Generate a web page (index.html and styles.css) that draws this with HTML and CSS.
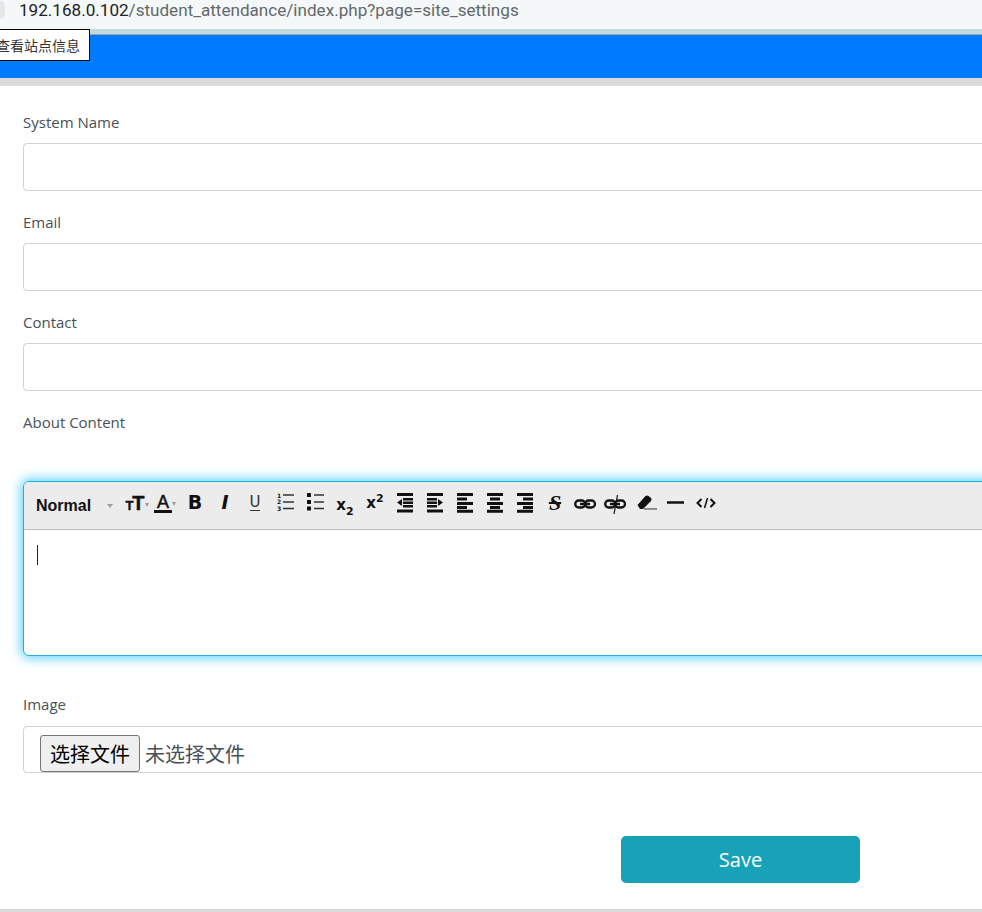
FILE: index.html
```html
<!DOCTYPE html>
<html lang="en">
<head>
  <meta charset="UTF-8">
  <meta name="viewport" content="width=device-width, initial-scale=1.0">
  <title>Site Settings</title>
  <link rel="stylesheet" href="styles.css">
</head>
<body>
  <!-- Browser address bar -->
  <div class="addressbar">
    <span class="site-chip"></span>
    <span class="url"><span class="url-host">192.168.0.102</span>/student_attendance/index.php?page=site_settings</span>
  </div>
  <div class="addressbar-edge"></div>
  <div class="tooltip">查看站点信息</div>

  <div class="topbar"></div>
  <div class="topbar-shadow"></div>

  <form class="settings-form">
    <div class="form-group">
      <label class="form-label">System Name</label>
      <input class="form-input" type="text">
    </div>
    <div class="form-group">
      <label class="form-label">Email</label>
      <input class="form-input" type="text">
    </div>
    <div class="form-group">
      <label class="form-label">Contact</label>
      <input class="form-input" type="text">
    </div>

    <div class="form-group form-group-editor">
      <label class="form-label">About Content</label>
      <div class="editor">
        <div class="editor-toolbar">
          <div class="style-select">
            <span class="style-name">Normal</span>
            <span class="caret-down"></span>
          </div>
          <span class="tool tool-size"><span class="t-small">T</span><span class="t-big">T</span><span class="caret-small"></span></span>
          <span class="tool tool-color"><span class="color-a">A</span><span class="caret-small"></span></span>
          <span class="tool tool-text tool-bold">B</span>
          <span class="tool tool-text tool-italic">I</span>
          <span class="tool tool-text tool-underline"><span class="underline-u">U</span></span>
          <span class="tool">
            <svg width="30" height="30" viewBox="0 0 30 30">
              <text class="ol-num" x="7" y="9.5">1</text><text class="ol-num" x="7" y="16">2</text><text class="ol-num" x="7" y="22.5">3</text>
              <path d="M13 7h11M13 14h11M13 20.5h11" stroke="#333" stroke-width="1.3" fill="none"/>
            </svg>
          </span>
          <span class="tool">
            <svg width="30" height="30" viewBox="0 0 30 30">
              <path d="M7 5h4v4H7zM7 12h4v4H7zM7 18.500h4v4H7z" fill="#111"/>
              <path d="M14 7h10M14 14h10M14 20.500h10" stroke="#333" stroke-width="1.3" fill="none"/>
            </svg>
          </span>
          <span class="tool tool-text tool-script"><span class="script-sub">x<sub>2</sub></span></span>
          <span class="tool tool-text tool-script"><span class="script-sup">x<sup>2</sup></span></span>
          <span class="tool">
            <svg width="30" height="30" viewBox="0 0 30 30">
              <path d="M7 5h16v3H7zM13 10h10v2.400H13zM13 13.500h10v2.400H13zM13 17h10v2.400H13zM7 21.500h16v3H7z" fill="#111"/>
              <path d="M7 14.500l5-3.500v7z" fill="#111"/>
            </svg>
          </span>
          <span class="tool">
            <svg width="30" height="30" viewBox="0 0 30 30">
              <path d="M7 5h16v3H7zM7 10h10v2.400H7zM7 13.500h10v2.400H7zM7 17h10v2.400H7zM7 21.500h16v3H7z" fill="#111"/>
              <path d="M23 14.500l-5-3.500v7z" fill="#111"/>
            </svg>
          </span>
          <span class="tool">
            <svg width="30" height="30" viewBox="0 0 30 30">
              <path d="M7 5h16v3H7zM7 9.500h10v3H7zM7 14h16v3H7zM7 18h10v3H7zM7 21.800h16v3H7z" fill="#111"/>
            </svg>
          </span>
          <span class="tool">
            <svg width="30" height="30" viewBox="0 0 30 30">
              <path d="M7 5h16v3H7zM10 9.500h10v3H10zM7 14h16v3H7zM10 18h10v3H10zM7 21.800h16v3H7z" fill="#111"/>
            </svg>
          </span>
          <span class="tool">
            <svg width="30" height="30" viewBox="0 0 30 30">
              <path d="M7 5h16v3H7zM13 9.500h10v3H13zM7 14h16v3H7zM13 18h10v3H13zM7 21.800h16v3H7z" fill="#111"/>
            </svg>
          </span>
          <span class="tool tool-text tool-strike">S</span>
          <span class="tool">
            <svg width="30" height="30" viewBox="0 0 30 30">
              <rect x="5.200" y="12.500" width="10" height="7" rx="3.500" fill="none" stroke="#111" stroke-width="2.300"/>
              <rect x="15" y="12.500" width="10" height="7" rx="3.500" fill="none" stroke="#111" stroke-width="2.300"/>
              <path d="M10 16h10" stroke="#111" stroke-width="2.300"/>
            </svg>
          </span>
          <span class="tool">
            <svg width="30" height="30" viewBox="0 0 30 30">
              <rect x="5.200" y="12.500" width="10" height="7" rx="3.500" fill="none" stroke="#111" stroke-width="2.300"/>
              <rect x="15" y="12.500" width="10" height="7" rx="3.500" fill="none" stroke="#111" stroke-width="2.300"/>
              <path d="M10 16h10" stroke="#111" stroke-width="2.300"/>
              <path d="M17.500 7l-3.500 19" stroke="#111" stroke-width="1.200"/>
            </svg>
          </span>
          <span class="tool">
            <svg width="30" height="30" viewBox="0 0 30 30">
              <path d="M7.500 17l8-9c1-.8 2-.8 3 0l2.500 2c.7 1 .7 2 0 3l-8 8H10z" fill="#111"/>
              <path d="M14 21h13" stroke="#666" stroke-width="1.300"/>
            </svg>
          </span>
          <span class="tool">
            <svg width="30" height="30" viewBox="0 0 30 30">
              <path d="M7 14.500h17" stroke="#111" stroke-width="2.600"/>
            </svg>
          </span>
          <span class="tool">
            <svg width="30" height="30" viewBox="0 0 30 30">
              <path d="M11.500 11l-4 4 4 4M20.500 11l4 4-4 4" fill="none" stroke="#111" stroke-width="2"/>
              <path d="M17.500 10l-3 10" fill="none" stroke="#111" stroke-width="1.500"/>
            </svg>
          </span>
        </div>
        <div class="editor-body"><span class="text-cursor"></span></div>
      </div>
    </div>

    <div class="form-group form-group-image">
      <label class="form-label">Image</label>
      <div class="file-input">
        <button class="file-button" type="button">选择文件</button>
        <span class="file-name">未选择文件</span>
      </div>
    </div>

    <div class="form-footer">
      <button class="save-button" type="submit">Save</button>
    </div>
  </form>

  <div class="page-end"></div>
</body>
</html>
```

FILE: styles.css
```css
html, body {
  height: 912px;
  overflow: hidden;
}
body {
  margin: 0;
  padding: 0;
  position: relative;
  width: 982px;
  font-family: "Open Sans", "Noto Sans", sans-serif;
  background: #fff;
  color: #495057;
}

/* browser chrome */
.addressbar {
  height: 29px;
  background: #f4f8f8;
  display: flex;
  align-items: center;
  overflow: hidden;
}
.site-chip {
  width: 5px;
  height: 18px;
  flex: none;
  margin-top: -10px;
  background: #e6e8e8;
  border-radius: 0 10px 10px 0;
}
.url {
  margin-left: 14px;
  position: relative;
  top: -5px;
  font-family: Roboto, "Liberation Sans", sans-serif;
  font-size: 17.1px;
  color: #63686c;
  white-space: nowrap;
}
.url-host {
  color: #202124;
}
.addressbar-edge {
  height: 5px;
  background: #c5dade;
  border-bottom: 1px solid #9aa5a7;
}
.tooltip {
  position: absolute;
  top: 29px;
  left: -11px;
  height: 30px;
  padding: 0 9px 0 6px;
  border: 1px solid #000;
  background: #fff;
  color: #333;
  font-family: "Noto Sans CJK SC", sans-serif;
  font-size: 14px;
  line-height: 30px;
  white-space: nowrap;
}

/* app top bar */
.topbar {
  height: 43px;
  background: #007bff;
}
.topbar-shadow {
  height: 8px;
  background: #dcdbdc;
}

/* form */
.settings-form {
  width: 1435px;
  padding: 25px 0 0 23px;
}
.form-group {
  margin-bottom: 20px;
}
.form-label {
  display: block;
  height: 32px;
  font-size: 15px;
  line-height: 22px;
}
.form-input {
  display: block;
  box-sizing: border-box;
  width: 100%;
  height: 48px;
  padding: 6px 12px;
  border: 1px solid #ced4da;
  border-radius: 4px;
  background: #fff;
}
.form-group-editor {
  margin-bottom: 37px;
}
.form-group-editor .form-label {
  height: 70px;
}
.form-group-image {
  margin-bottom: 63px;
}
.form-group-image .form-label {
  height: 33px;
}

/* rich text editor */
.editor {
  box-sizing: border-box;
  height: 175px;
  border: 1px solid #1ab0e6;
  border-radius: 6px;
  box-shadow: 0 0 12px 2px #5ad0fb;
  overflow: hidden;
  background: #fff;
}
.editor-toolbar {
  box-sizing: border-box;
  height: 48px;
  padding: 6px 0 0 12px;
  display: flex;
  align-items: flex-start;
  background: #ececec;
  border-bottom: 1px solid #bdbdbd;
}
.style-select {
  width: 84px;
  height: 30px;
  flex: none;
  display: flex;
  align-items: center;
  padding-top: 6px;
  box-sizing: border-box;
}
.style-name {
  font-family: "Liberation Sans", Arial, sans-serif;
  font-size: 16px;
  font-weight: bold;
  color: #111;
  width: 71px;
}
.caret-down {
  border-left: 3.5px solid transparent;
  border-right: 3.5px solid transparent;
  border-top: 4px solid #a0a0a0;
}
.caret-small {
  border-left: 2.5px solid transparent;
  border-right: 2.5px solid transparent;
  border-top: 4px solid #999;
  align-self: center;
}
.tool {
  width: 30px;
  height: 30px;
  flex: none;
  display: flex;
  align-items: center;
  justify-content: center;
  color: #111;
  font-family: "DejaVu Sans", sans-serif;
  font-weight: bold;
}
.tool svg {
  display: block;
}
.ol-num {
  font-family: "DejaVu Sans", sans-serif;
  font-size: 6px;
  font-weight: bold;
  fill: #111;
}
.tool-size {
  box-sizing: border-box;
  padding: 3px 0 0 4px;
  font-family: "Liberation Sans", sans-serif;
  align-items: baseline;
  line-height: 25px;
  -webkit-text-stroke: 0.4px #111;
}
.t-small {
  font-size: 13px;
}
.t-big {
  font-size: 20px;
  margin-left: -1px;
}
.tool-color {
  box-sizing: border-box;
  padding: 2px 0 0 0;
}
.color-a {
  font-family: "Liberation Sans", sans-serif;
  font-size: 18px;
  font-weight: normal;
  -webkit-text-stroke: 0.5px #111;
  line-height: 15px;
  width: 18px;
  text-align: center;
  border-bottom: 3px solid #111;
}
.tool-text {
  font-size: 19px;
}
.tool-bold,
.tool-italic {
  padding-bottom: 3px;
  box-sizing: border-box;
}
.tool-italic {
  font-style: italic;
}
.tool-underline {
  font-weight: normal;
}
.underline-u {
  font-size: 15px;
  line-height: 15px;
  border-bottom: 1px solid #333;
  color: #333;
  margin-top: -1px;
}
.tool-script {
  font-size: 15px;
}
.tool-script sub,
.tool-script sup {
  font-size: 11px;
  line-height: 0;
}
.tool-script sub {
  vertical-align: -5px;
}
.tool-script sup {
  vertical-align: 6px;
}
.script-sub {
  margin-top: 3px;
}
.tool-strike {
  font-family: "Liberation Serif", serif;
  font-size: 22px;
  font-style: italic;
  text-decoration: line-through;
  text-decoration-thickness: 1.5px;
}
.editor-body {
  height: 125px;
  padding: 15px 0 0 13px;
  box-sizing: border-box;
}
.text-cursor {
  display: block;
  width: 1px;
  height: 20px;
  background: #222;
}

/* file picker */
.file-input {
  box-sizing: border-box;
  height: 47px;
  padding: 8px 0 0 16px;
  border: 1px solid #ced4da;
  border-radius: 4px;
  display: flex;
  align-items: flex-start;
  overflow: hidden;
  font-family: "Noto Sans CJK SC", sans-serif;
  font-size: 20px;
}
.file-button {
  box-sizing: border-box;
  width: 100px;
  height: 37px;
  padding: 0;
  border: 1px solid #767676;
  border-radius: 3px;
  background: #efefef;
  color: #000;
  font-family: "Noto Sans CJK SC", sans-serif;
  font-size: 20px;
  line-height: 33px;
}
.file-name {
  margin-left: 5px;
  line-height: 37px;
  white-space: nowrap;
}

/* save row */
.form-footer {
  display: flex;
  justify-content: center;
}
.save-button {
  width: 239px;
  height: 47px;
  border: 0;
  border-radius: 5px;
  background: #17a2b8;
  color: #fff;
  font-family: "Open Sans", sans-serif;
  font-size: 20px;
}

.page-end {
  position: absolute;
  left: 0;
  right: 0;
  top: 909px;
  height: 3px;
  background: #d9d9d9;
}
```
